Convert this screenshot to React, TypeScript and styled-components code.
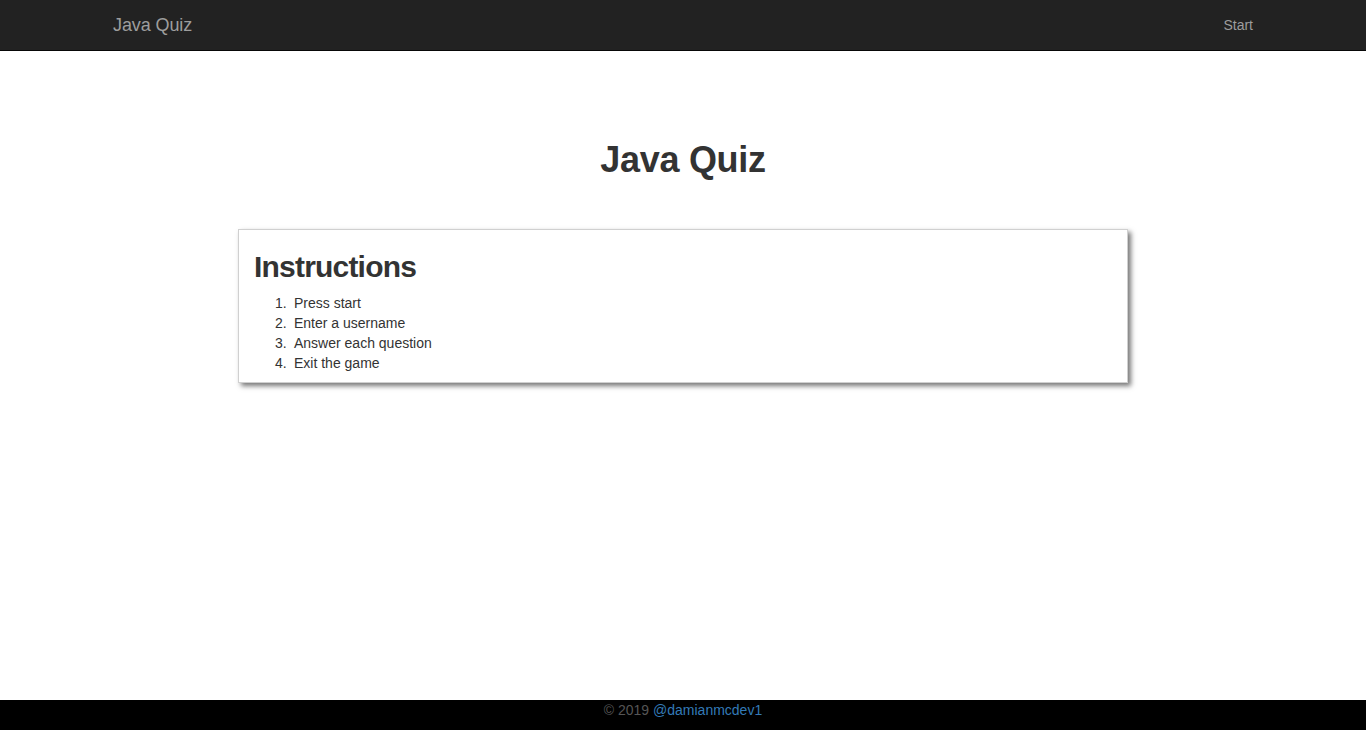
import React from "react";
import styled, { createGlobalStyle } from "styled-components";

const Global = createGlobalStyle`
  html, body { margin: 0; padding: 0; }
  body {
    font-family: "Liberation Sans", Arial, Helvetica, sans-serif;
    font-size: 14px;
    line-height: 1.42857;
    color: #333;
    background: #fff;
  }
  * { box-sizing: border-box; }
`;

const Page = styled.div`
  min-height: 100vh;
  display: flex;
  flex-direction: column;
`;

const Navbar = styled.nav`
  height: 51px;
  background: #222;
  border-bottom: 1px solid #080808;
`;

const NavContainer = styled.div`
  width: 1170px;
  margin: 0 auto;
  height: 50px;
  display: flex;
  justify-content: space-between;
  align-items: center;
`;

const Brand = styled.a`
  padding: 15px;
  font-size: 18px;
  line-height: 20px;
  color: #9d9d9d;
  text-decoration: none;
  letter-spacing: -0.1px;
`;

const NavLink = styled.a`
  padding: 15px;
  font-size: 14px;
  line-height: 20px;
  color: #9d9d9d;
  text-decoration: none;
`;

const Main = styled.main`
  flex: 1;
  display: flex;
  flex-direction: column;
  align-items: center;
  padding-top: 89px;
`;

const Title = styled.h1`
  margin: 0 0 49px;
  font-size: 36px;
  font-weight: 700;
  line-height: 40px;
  color: #333;
  text-align: center;
  letter-spacing: -0.3px;
`;

const Card = styled.section`
  width: 890px;
  border: 1px solid #d0d0d0;
  background: #fff;
  box-shadow: 3px 3px 5px #777;
  padding: 0 15px;
`;

const CardTitle = styled.h2`
  margin: 20px 0 10px;
  font-size: 30px;
  font-weight: 700;
  line-height: 33px;
  color: #333;
  letter-spacing: -0.8px;
`;

const List = styled.ol`
  margin: 0 0 9px;
  padding-left: 40px;
  list-style: none;
  counter-reset: step;
`;

const Item = styled.li`
  position: relative;
  line-height: 20px;
  color: #333;
  counter-increment: step;

  &::before {
    content: counter(step) ".";
    position: absolute;
    left: -19px;
  }
`;

const Footer = styled.footer`
  height: 30px;
  background: #000;
  text-align: center;
  line-height: 20px;
  color: #555;
`;

const FooterLink = styled.a`
  color: #337ab7;
  text-decoration: none;
`;

export default function App() {
  return (
    <Page>
      <Global />
      <Navbar>
        <NavContainer>
          <Brand href="#">Java Quiz</Brand>
          <NavLink href="#">Start</NavLink>
        </NavContainer>
      </Navbar>
      <Main>
        <Title>Java Quiz</Title>
        <Card>
          <CardTitle>Instructions</CardTitle>
          <List>
            <Item>Press start</Item>
            <Item>Enter a username</Item>
            <Item>Answer each question</Item>
            <Item>Exit the game</Item>
          </List>
        </Card>
      </Main>
      <Footer>
        © 2019 <FooterLink href="#">@damianmcdev1</FooterLink>
      </Footer>
    </Page>
  );
}
